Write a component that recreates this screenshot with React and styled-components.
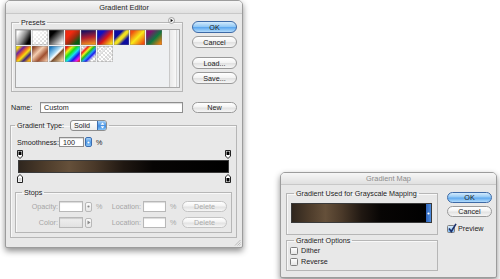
import React from "react";
import styled, { createGlobalStyle } from "styled-components";

const GlobalStyle = createGlobalStyle`
  html, body {
    margin: 0;
    padding: 0;
    background: #fff;
  }
  body {
    width: 500px;
    height: 279px;
    overflow: hidden;
    font-family: "Liberation Sans", Arial, sans-serif;
  }
`;

const checker = "repeating-conic-gradient(#d9d9d9 0 25%, #ffffff 0 50%) 0 0 / 4px 4px";

// preset swatches, top row then second row
const presets = [
  "linear-gradient(120deg, #ffffff 15%, #8a8a8a 50%, #000 80%)",
  `linear-gradient(135deg, #fff 10%, rgba(255,255,255,0) 80%), ${checker}`,
  "linear-gradient(135deg, #000 25%, #777 55%, #fff 90%)",
  "linear-gradient(135deg, #f02a10 30%, #a02a10 55%, #0c5a14 80%)",
  "linear-gradient(170deg, #1c1060 10%, #b02030 50%, #f09020 90%)",
  "linear-gradient(135deg, #1010c0 25%, #d81818 55%, #f8e018 90%)",
  "linear-gradient(135deg, #0c0ca0 30%, #f0e020 45%, #f0e020 55%, #0c0ca0 72%)",
  "linear-gradient(135deg, #f05010 15%, #f8e818 50%, #f05010 88%)",
  "linear-gradient(135deg, #801070 20%, #107840 55%, #f08010 90%)",
  "linear-gradient(135deg, #f8e010 12%, #7020a0 28%, #f07020 44%, #f8e010 56%, #3a2080 72%, #f8b010 88%)",
  "linear-gradient(135deg, #904020 8%, #f4cdb0 38%, #a05030 65%, #f0c0a0 92%)",
  "linear-gradient(135deg, #1a78c0 10%, #a8d8f4 40%, #ffffff 50%, #7a5030 58%, #f0d0a0 90%)",
  "linear-gradient(135deg, #f01818 10%, #f0f018 25%, #18e018 40%, #18e0f0 55%, #1818f0 70%, #f018f0 85%, #f01818 95%)",
  `linear-gradient(135deg, rgba(255,255,255,0) 15%, #f02020 25%, #f0f020 35%, #20c020 45%, #20a0f0 55%, #2020f0 65%, rgba(255,255,255,0) 78%), ${checker}`,
  `repeating-linear-gradient(135deg, rgba(255,255,255,0) 0 3px, rgba(230,230,230,0.9) 3px 4px), ${checker}`,
];

const Desktop = styled.div`
  position: relative;
  width: 500px;
  height: 279px;
  overflow: hidden;
  background: #fff;
`;

const Window = styled.div`
  position: absolute;
  left: ${(p) => p.$left}px;
  top: ${(p) => p.$top}px;
  width: ${(p) => p.$width}px;
  height: ${(p) => p.$height}px;
  box-sizing: border-box;
  border: 1px solid #9c9c9c;
  border-radius: 5px 5px 2px 2px;
  background: #e8e8e8;
  box-shadow: 0 3px 6px rgba(0, 0, 0, 0.45);
  display: flex;
  flex-direction: column;
  font-size: 7.2px;
  line-height: 9px;
  color: #1c1c1c;
`;

const TitleBar = styled.div`
  flex: none;
  height: ${(p) => p.$h}px;
  box-sizing: border-box;
  display: flex;
  align-items: center;
  justify-content: center;
  border-radius: 4px 4px 0 0;
  background: linear-gradient(#f6f6f6, #e0e0e0);
  border-bottom: 1px solid #c8c8c8;
  color: ${(p) => (p.$inactive ? "#8c8c8c" : "#262626")};
  font-size: 7.4px;
`;

const Body = styled.div`
  flex: 1;
  display: flex;
  flex-direction: column;
  padding: ${(p) => p.$pad};
`;

const Row = styled.div`
  display: flex;
  align-items: ${(p) => p.$align || "center"};
  gap: ${(p) => p.$gap || 0}px;
  margin-top: ${(p) => p.$mt || 0}px;
  height: ${(p) => (p.$h ? `${p.$h}px` : "auto")};
  position: relative;
`;

const Column = styled.div`
  display: flex;
  flex-direction: column;
  flex: none;
  width: ${(p) => p.$w}px;
  padding-top: ${(p) => p.$pt || 0}px;
`;

const Group = styled.fieldset`
  margin: ${(p) => p.$margin || 0};
  padding: ${(p) => p.$pad};
  width: ${(p) => (p.$w ? `${p.$w}px` : "auto")};
  box-sizing: border-box;
  border: 1px solid #b6b6b6;
  box-shadow: 1px 1px 0 #f8f8f8 inset;
  min-width: 0;
  flex: none;
`;

const Legend = styled.legend`
  padding: 0 2px;
  margin-left: ${(p) => p.$indent}px;
  line-height: 9px;
  color: ${(p) => (p.$disabled ? "#9a9a9a" : "#1c1c1c")};
`;

const LegendInner = styled.span`
  display: inline-flex;
  align-items: center;
  gap: 6px;
  height: ${(p) => p.$h || 9}px;
`;

const PushButton = styled.button`
  width: 45px;
  height: ${(p) => p.$h || 12}px;
  margin: ${(p) => p.$margin || 0};
  padding: 0;
  box-sizing: border-box;
  border-radius: 6px;
  border: 1px solid ${(p) => (p.$primary ? "#3e6aa6" : p.$disabled ? "#c4c4c4" : "#9a9a9a")};
  background: ${(p) =>
    p.$primary
      ? "linear-gradient(#d4ebfd 0%, #93c9f5 45%, #5fa9ef 55%, #b3dcfc 100%)"
      : "linear-gradient(#ffffff 0%, #f3f3f3 45%, #e2e2e2 55%, #f6f6f6 100%)"};
  font-family: inherit;
  font-size: 7.2px;
  line-height: 9px;
  color: ${(p) => (p.$disabled ? "#ababab" : "#1c1c1c")};
  display: flex;
  align-items: center;
  justify-content: center;
  flex: none;
`;

const Label = styled.span`
  flex: none;
  width: ${(p) => (p.$w ? `${p.$w}px` : "auto")};
  text-align: ${(p) => p.$align || "left"};
  margin-right: ${(p) => p.$mr || 0}px;
  color: ${(p) => (p.$disabled ? "#a6a6a6" : "inherit")};
  white-space: nowrap;
`;

const TextBox = styled.div`
  flex: none;
  width: ${(p) => p.$w}px;
  height: ${(p) => p.$h || 10}px;
  box-sizing: border-box;
  border: 1px solid ${(p) => (p.$disabled ? "#b8b8b8" : "#8e8e8e")};
  box-shadow: inset 0 1px 1px rgba(0, 0, 0, 0.15);
  background: ${(p) => p.$bg || "#fff"};
  padding-left: 3px;
  display: flex;
  align-items: center;
  margin-right: ${(p) => p.$mr || 0}px;
`;

const Stepper = styled.div`
  flex: none;
  width: ${(p) => p.$w || 7}px;
  height: 10px;
  box-sizing: border-box;
  border-radius: 2px;
  border: 1px solid ${(p) => (p.$blue ? "#3b6db0" : "#b8b8b8")};
  background: ${(p) =>
    p.$blue ? "linear-gradient(#a6d2f8, #4d98e6 55%, #8cc6f6)" : "linear-gradient(#fbfbfb, #e6e6e6)"};
  display: flex;
  align-items: center;
  justify-content: center;
  margin-right: ${(p) => p.$mr || 0}px;
`;

const Select = styled.div`
  display: flex;
  width: 37px;
  height: 11px;
  box-sizing: border-box;
  border: 1px solid #8e8e8e;
  border-radius: 3px;
  background: linear-gradient(#ffffff, #ececec);
  overflow: hidden;
`;

const SelectText = styled.span`
  flex: 1;
  padding-left: 3px;
  display: flex;
  align-items: center;
`;

const SelectArrows = styled.span`
  width: 8px;
  background: linear-gradient(#a6d2f8, #3f8de2 55%, #86c2f6);
  border-left: 1px solid #3b6db0;
  display: flex;
  align-items: center;
  justify-content: center;
`;

const PresetList = styled.div`
  display: flex;
  height: 59px;
  box-sizing: border-box;
  border: 1px solid #a9a9a9;
  background: #eef0f2;
`;

const SwatchGrid = styled.div`
  flex: 1;
  display: grid;
  grid-template-columns: repeat(9, 15.3px);
  grid-auto-rows: 15.3px;
  gap: 1px;
  align-content: start;
`;

const Swatch = styled.div`
  background: ${(p) => p.$bg};
  box-shadow: inset 0 0 0 0.5px rgba(120, 120, 120, 0.6);
`;

const ScrollTrack = styled.div`
  width: 6px;
  margin-right: 2px;
  border-left: 1px solid #c9c9c9;
  border-right: 1px solid #d8d8d8;
  background: linear-gradient(90deg, #e9e9e9, #f8f8f8);
`;

const MenuArrow = styled.div`
  position: absolute;
  left: 157px;
  top: -1px;
  width: 7px;
  height: 7px;
`;

const GradientBar = styled.div`
  height: ${(p) => p.$h}px;
  margin: ${(p) => p.$margin || 0};
  box-sizing: border-box;
  border: 1px solid #3a3a3a;
  background: linear-gradient(
    90deg,
    #2f261e 0%,
    #4c3b2a 12%,
    #65503a 24%,
    #4a3929 36%,
    #201812 50%,
    #070504 64%,
    #000 100%
  );
  display: flex;
  justify-content: flex-end;
`;

const BarArrow = styled.div`
  width: 5px;
  background: linear-gradient(90deg, #2f63b8, #4e8ee0);
  display: flex;
  align-items: center;
  justify-content: center;
`;

const StopRow = styled.div`
  display: flex;
  justify-content: space-between;
  height: 9px;
  margin: ${(p) => p.$margin};
`;

const Check = styled.div`
  width: 8px;
  height: 8px;
  box-sizing: border-box;
  border: 1px solid #7f7f7f;
  border-radius: 1.5px;
  background: ${(p) => (p.$on ? "linear-gradient(#d8ecfc, #7fb9ef)" : "linear-gradient(#ffffff, #e6e6e6)")};
  margin-right: 3px;
  position: relative;
  flex: none;
`;

const CheckMark = styled.svg`
  position: absolute;
  left: 0px;
  top: -3px;
`;

const Grip = styled.svg`
  position: absolute;
  right: 1px;
  bottom: 1px;
`;

const UpDown = () => (
  <svg width="5" height="7" viewBox="0 0 5 7">
    <path d="M2.5 0.5 L4.5 2.8 H0.5 Z M2.5 6.5 L4.5 4.2 H0.5 Z" fill="#fff" />
  </svg>
);

const Dot = ({ color = "#fff" }) => (
  <svg width="3" height="3" viewBox="0 0 3 3">
    <circle cx="1.5" cy="1.5" r="1.1" fill={color} />
  </svg>
);

const RightTri = ({ color }) => (
  <svg width="4" height="5" viewBox="0 0 4 5">
    <path d="M0.5 0.5 L3.5 2.5 L0.5 4.5 Z" fill={color} />
  </svg>
);

const OpacityStop = () => (
  <svg width="6" height="9" viewBox="0 0 6 9">
    <path d="M0.5 0.5 H5.5 V6 L3 8.5 L0.5 6 Z" fill="#fff" stroke="#222" strokeWidth="1" />
    <rect x="1.5" y="1.5" width="3" height="3.5" fill="#000" />
  </svg>
);

const ColorStop = ({ fill }) => (
  <svg width="6" height="9" viewBox="0 0 6 9">
    <path d="M3 0.5 L5.5 3 V8.5 H0.5 V3 Z" fill="#fff" stroke="#222" strokeWidth="1" />
    <rect x="1.5" y="4" width="3" height="3.5" fill={fill} />
  </svg>
);

const GradientEditor = () => (
  <Window $left={5} $top={0} $width={238} $height={248}>
    <TitleBar $h={13}>Gradient Editor</TitleBar>
    <Body $pad="4px 5px 0 5px">
      <Row $align="flex-start" $gap={9}>
        <Group $w={172} $pad="2px 2px 3px 3px">
          <Legend $indent={4}>Presets</Legend>
          <PresetList>
            <SwatchGrid>
              {presets.map((bg, i) => (
                <Swatch key={i} $bg={bg} />
              ))}
            </SwatchGrid>
            <ScrollTrack />
          </PresetList>
        </Group>
        <MenuArrow>
          <svg width="7" height="7" viewBox="0 0 7 7">
            <circle cx="3.5" cy="3.5" r="3" fill="#f4f4f4" stroke="#777" strokeWidth="0.6" />
            <path d="M2.6 1.8 L5 3.5 L2.6 5.2 Z" fill="#111" />
          </svg>
        </MenuArrow>
        <Column $w={45} $pt={3}>
          <PushButton $primary>OK</PushButton>
          <PushButton $margin="3px 0 0">Cancel</PushButton>
          <PushButton $margin="9px 0 0">Load...</PushButton>
          <PushButton $margin="3px 0 0">Save...</PushButton>
        </Column>
      </Row>

      <Row $mt={10} $h={11} $gap={0}>
        <Label $w={29}>Name:</Label>
        <TextBox $w={143} $h={11} $mr={9}>
          Custom
        </TextBox>
        <PushButton $h={11}>New</PushButton>
      </Row>

      <Group $margin="7px 0 0 -1px" $pad="0 6px 4px 6px">
        <Legend $indent={-2}>
          <LegendInner $h={11}>
            Gradient Type:
            <Select>
              <SelectText>Solid</SelectText>
              <SelectArrows>
                <UpDown />
              </SelectArrows>
            </Select>
          </LegendInner>
        </Legend>

        <Row $mt={6} $h={10}>
          <Label $w={42}>Smoothness:</Label>
          <TextBox $w={25} $mr={1}>
            100
          </TextBox>
          <Stepper $blue $mr={4}>
            <Dot />
          </Stepper>
          <Label>%</Label>
        </Row>

        <StopRow $margin="3px -1px 0 0">
          <OpacityStop />
          <OpacityStop />
        </StopRow>
        <GradientBar $h={13} $margin="1px 1px 0 1px" />
        <StopRow $margin="1px -1px 0 0">
          <ColorStop fill="#d8d8d8" />
          <ColorStop fill="#000" />
        </StopRow>

        <Group $margin="5px -2px 0 -2px" $pad="4px 1px 4px 1px">
          <Legend $indent={5}>Stops</Legend>
          <Row $h={11}>
            <Label $w={41} $align="right" $mr={1} $disabled>
              Opacity:
            </Label>
            <TextBox $w={24} $h={11} $mr={2} $disabled />
            <Stepper $mr={4}>
              <Dot color="#888" />
            </Stepper>
            <Label $w={7} $disabled>
              %
            </Label>
            <Label $w={38} $align="right" $mr={2} $disabled>
              Location:
            </Label>
            <TextBox $w={23} $h={11} $mr={4} $disabled />
            <Label $w={8} $disabled>
              %
            </Label>
            <PushButton $h={11} $margin="0 0 0 4px" $disabled>
              Delete
            </PushButton>
          </Row>
          <Row $h={11} $mt={5}>
            <Label $w={41} $align="right" $mr={1} $disabled>
              Color:
            </Label>
            <TextBox $w={24} $h={11} $mr={2} $bg="linear-gradient(#efefef, #e2e2e2)" $disabled />
            <Stepper $mr={4}>
              <RightTri color="#8a8a8a" />
            </Stepper>
            <Label $w={7} />
            <Label $w={38} $align="right" $mr={2} $disabled>
              Location:
            </Label>
            <TextBox $w={23} $h={11} $mr={4} $disabled />
            <Label $w={8} $disabled>
              %
            </Label>
            <PushButton $h={11} $margin="0 0 0 4px" $disabled>
              Delete
            </PushButton>
          </Row>
        </Group>
      </Group>
    </Body>
    <Grip width="7" height="7" viewBox="0 0 7 7">
      <path d="M6.5 1 L1 6.5 M6.5 3.5 L3.5 6.5 M6.5 5.5 L5.5 6.5" stroke="#a8a8a8" strokeWidth="0.7" />
    </Grip>
  </Window>
);

const GradientMap = () => (
  <Window $left={280} $top={172} $width={217} $height={106}>
    <TitleBar $h={12} $inactive>
      Gradient Map
    </TitleBar>
    <Body $pad="4px 4px 0 5px">
      <Row $align="flex-start" $gap={9}>
        <Column $w={152}>
          <Group $pad="5px 5px 11px 4px">
            <Legend $indent={3}>Gradient Used for Grayscale Mapping</Legend>
            <GradientBar $h={20}>
              <BarArrow>
                <Dot />
              </BarArrow>
            </GradientBar>
          </Group>
          <Group $margin="1px 0 0" $pad="1px 3px 4px 3px">
            <Legend $indent={4}>Gradient Options</Legend>
            <Row $h={9}>
              <Check />
              Dither
            </Row>
            <Row $h={9} $mt={2}>
              <Check />
              Reverse
            </Row>
          </Group>
        </Column>
        <Column $w={45} $pt={3}>
          <PushButton $primary $h={11}>
            OK
          </PushButton>
          <PushButton $h={11} $margin="3px 0 0">
            Cancel
          </PushButton>
          <Row $mt={7} $h={9}>
            <Check $on>
              <CheckMark width="9" height="10" viewBox="0 0 9 10">
                <path d="M1 5.5 L3.3 8.5 L8 0.8" fill="none" stroke="#1b2f6a" strokeWidth="1.6" />
              </CheckMark>
            </Check>
            Preview
          </Row>
        </Column>
      </Row>
    </Body>
  </Window>
);

const App = () => (
  <>
    <GlobalStyle />
    <Desktop>
      <GradientEditor />
      <GradientMap />
    </Desktop>
  </>
);

export default App;
